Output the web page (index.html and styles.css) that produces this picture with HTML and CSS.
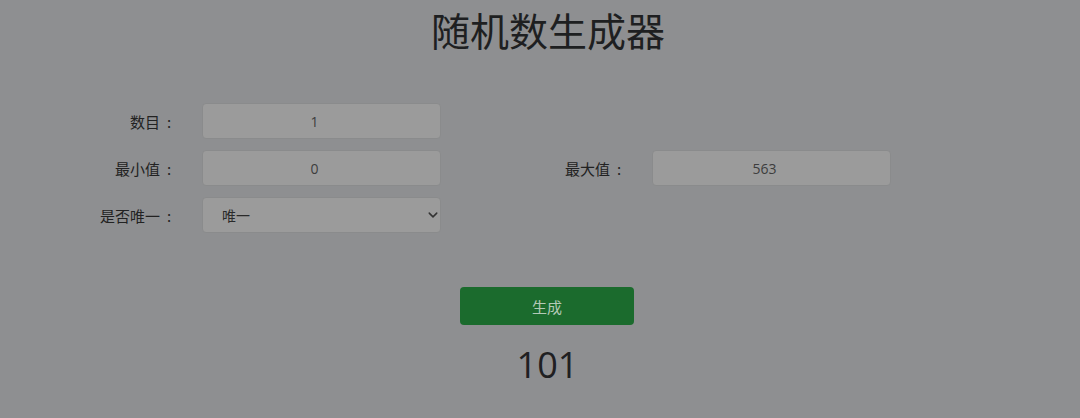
FILE: index.html
```html
<!DOCTYPE html>
<html lang="zh-CN">
<head>
<meta charset="utf-8">
<title>随机数生成器</title>
<link rel="stylesheet" href="styles.css">
</head>
<body>
<main class="page">
  <h1 class="title">随机数生成器</h1>
  <form class="form">
    <label class="label" for="count">数目<span class="colon">:</span></label>
    <input class="field" id="count" type="text" value="1">
    <span class="spacer"></span>
    <span class="spacer"></span>

    <label class="label" for="min">最小值<span class="colon">:</span></label>
    <input class="field" id="min" type="text" value="0">
    <label class="label" for="max">最大值<span class="colon">:</span></label>
    <input class="field" id="max" type="text" value="563">

    <label class="label" for="uniq">是否唯一<span class="colon">:</span></label>
    <div class="select-wrap">
      <select class="field select" id="uniq">
        <option>唯一</option>
        <option>不唯一</option>
      </select>
      <svg class="chevron" viewBox="0 0 16 16" width="10" height="10" aria-hidden="true">
        <path d="M2 5l6 6 6-6" fill="none" stroke="#333" stroke-width="2.4" stroke-linecap="round" stroke-linejoin="round"/>
      </svg>
    </div>
  </form>
  <div class="actions">
    <button class="btn" type="button">生成</button>
  </div>
  <div class="result">101</div>
</main>
</body>
</html>
```

FILE: styles.css
```css
html, body {
  margin: 0;
  padding: 0;
  background: #8e8f91;
}
body {
  font-family: "Open Sans", "Noto Sans CJK SC", sans-serif;
  color: #222;
  width: 1080px;
  height: 418px;
  overflow: hidden;
}
.page {
  display: flex;
  flex-direction: column;
}
.title {
  margin: 0;
  padding-top: 4px;
  text-align: center;
  font-family: "Noto Sans CJK SC", sans-serif;
  font-weight: 400;
  font-size: 39px;
  line-height: 50px;
  color: #1e1f21;
  padding-left: 16px;
}
.form {
  margin-top: 49px;
  display: grid;
  grid-template-columns: 202px 240px 210px 240px;
  grid-auto-rows: 36px;
  row-gap: 11px;
  align-items: center;
}
.label {
  box-sizing: border-box;
  padding-right: 27px;
  text-align: right;
  font-family: "Noto Sans CJK SC", sans-serif;
  font-size: 15px;
  color: #222;
}
.colon {
  display: inline-block;
  width: 15px;
  padding-left: 3px;
  box-sizing: border-box;
  text-align: center;
}
.field {
  box-sizing: border-box;
  width: 239px;
  height: 36px;
  border: 1px solid #8a8b8c;
  border-radius: 4px;
  background: #9b9b9b;
  text-align: center;
  padding: 0 14px 0 0;
  font-family: "Open Sans", "Noto Sans CJK SC", sans-serif;
  font-size: 14px;
  color: #3d3d3d;
  outline: none;
}
.select-wrap {
  position: relative;
  width: 239px;
  height: 36px;
}
.select {
  appearance: none;
  -webkit-appearance: none;
  text-align: left;
  padding: 0 0 0 19px;
  font-family: "Noto Sans CJK SC", sans-serif;
  font-size: 14px;
  color: #2a2a2a;
}
.chevron {
  position: absolute;
  right: 3px;
  top: 13px;
  pointer-events: none;
}
.actions {
  margin-top: 54px;
  display: flex;
  justify-content: center;
  padding-left: 14px;
}
.btn {
  width: 174px;
  height: 38px;
  border: none;
  border-radius: 4px;
  background: #1b6b2d;
  color: #b3c9b7;
  font-family: "Noto Sans CJK SC", sans-serif;
  font-size: 15px;
}
.result {
  margin-top: 16px;
  text-align: center;
  padding-left: 15px;
  font-family: "Open Sans", sans-serif;
  font-size: 36px;
  line-height: 48px;
  color: #1f2022;
}
```
